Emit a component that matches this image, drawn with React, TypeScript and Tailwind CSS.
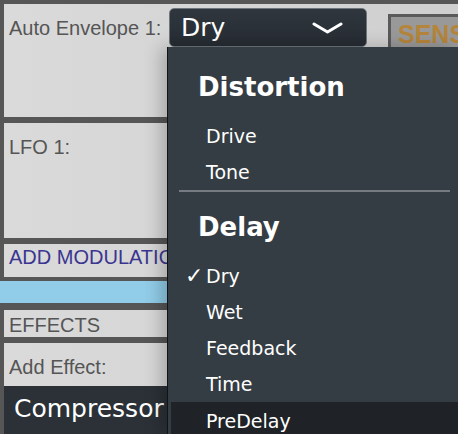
import React from "react";

const panel =
  "ml-[4px] bg-gradient-to-r from-[#dadada] to-[#cfcfcf] font-['Liberation_Sans',Arial,sans-serif] text-[20px]";

const menuItems = ["Wet", "Feedback", "Time"];

function Chevron() {
  return (
    <svg width="31" height="12" viewBox="0 0 31 12" fill="none">
      <path
        d="M2 2 L15.5 10 L29 2"
        stroke="white"
        strokeWidth="3"
        strokeLinecap="round"
        strokeLinejoin="round"
      />
    </svg>
  );
}

export default function App() {
  return (
    <div className="relative w-[458px] h-[434px] overflow-hidden bg-[#565656] flex flex-col pt-[4px]">
      {/* Auto envelope panel */}
      <div className={`${panel} text-[#555555] h-[113px] flex items-start pt-[4px] pl-[5px]`}>
        <div className="w-[160px] h-[39px] shrink-0 flex items-center whitespace-nowrap">
          Auto Envelope 1:
        </div>
        <div className="w-[198px] h-[39px] shrink-0 flex items-center justify-between pl-[11px] pr-[23px] rounded-[5px] border border-[#6e757b] bg-gradient-to-b from-[#2f363d] to-[#262c32] font-['DejaVu_Sans',sans-serif] text-[25px] text-white">
          <span>Dry</span>
          <Chevron />
        </div>
        <div className="ml-[21px] mt-[6px] h-[33px] w-[80px] shrink-0 border-l-[3px] border-t-[3px] border-[#5a5a5a] bg-[#999999] pl-[7px] pt-[2px] font-['Liberation_Sans',Arial,sans-serif] text-[25px] font-bold leading-[30px] text-[#b5853c] whitespace-nowrap">
          SENSE
        </div>
      </div>

      {/* LFO panel */}
      <div className={`${panel} text-[#555555] mt-[6px] h-[115px] pt-[4px] pl-[5px]`}>
        <div className="h-[39px] flex items-center">LFO 1:</div>
      </div>

      {/* Add modulation */}
      <div className={`${panel} text-[#3a3590] mt-[6px] h-[33px] pl-[5px]`}>
        <div className="h-[26px] flex items-center whitespace-nowrap">ADD MODULATION</div>
      </div>

      <div className="mt-[4px] h-[22px] bg-[#91cce8]" />

      {/* Effects */}
      <div className={`${panel} text-[#555555] mt-[7px] h-[27px] pl-[5px]`}>
        <div className="h-[30px] flex items-center">EFFECTS</div>
      </div>
      <div className={`${panel} text-[#555555] mt-[6px] h-[43px] pt-[4px] pl-[5px]`}>
        <div className="h-[39px] flex items-center">Add Effect:</div>
      </div>
      <div className="ml-[4px] flex-1 bg-[#2b3137] pl-[10px] pb-[3px] flex items-center font-['DejaVu_Sans',sans-serif] text-[25px] text-white whitespace-nowrap">
        Compressor
      </div>

      {/* Open dropdown menu */}
      <div className="absolute left-[167px] top-[47px] right-0 bottom-0 bg-[#353d44] border-l border-[#111417] shadow-[-6px_0_16px_rgba(0,0,0,0.22)] pt-[22px] font-['DejaVu_Sans',sans-serif] text-white">
        <div className="h-[37px] flex items-center pl-[30px] text-[26px] font-bold">Distortion</div>
        <div className="mt-[12px] h-[36px] flex items-center pl-[38px] text-[19px]">Drive</div>
        <div className="h-[36px] flex items-center pl-[38px] text-[19px]">Tone</div>
        <div className="ml-[11px] mr-[8px] h-[2px] bg-[#767b81]" />
        <div className="mt-[17px] h-[37px] flex items-center pl-[30px] text-[26px] font-bold">Delay</div>
        <div className="mt-[12px] h-[36px] flex items-center pl-[17px] text-[19px]">
          <span className="w-[21px] text-[22px] font-bold leading-none">✓</span>
          <span>Dry</span>
        </div>
        {menuItems.map((item) => (
          <div key={item} className="h-[36px] flex items-center pl-[38px] text-[19px]">
            {item}
          </div>
        ))}
        <div className="ml-[3px] h-[36px] flex items-center pl-[35px] pt-[3px] text-[19px] bg-[#1f2327]">
          PreDelay
        </div>
      </div>
    </div>
  );
}
